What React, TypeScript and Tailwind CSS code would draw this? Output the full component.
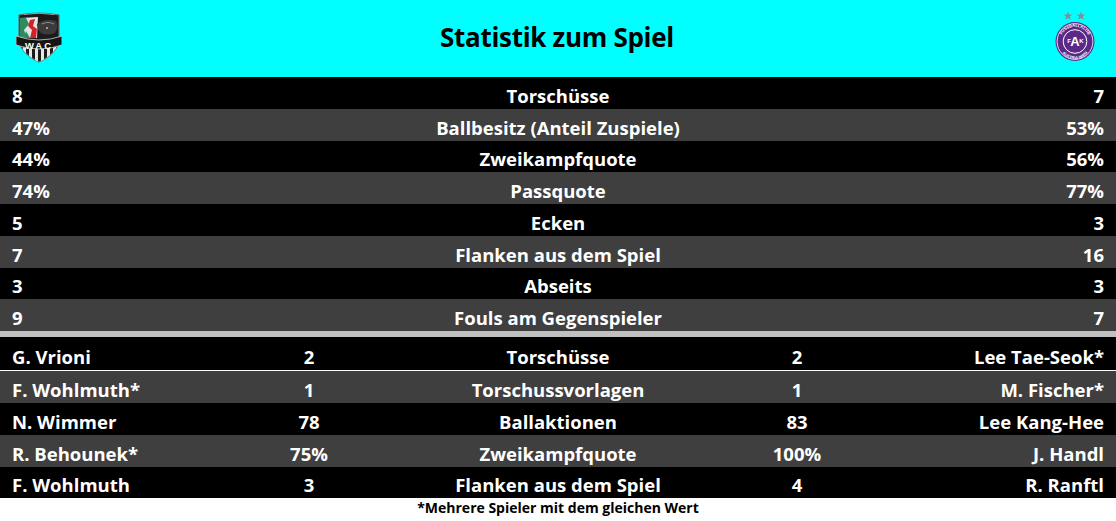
import React from "react";

const font = "font-['Open_Sans','Noto_Sans',sans-serif]";

const teamStats = [
  ["8", "Torschüsse", "7"],
  ["47%", "Ballbesitz (Anteil Zuspiele)", "53%"],
  ["44%", "Zweikampfquote", "56%"],
  ["74%", "Passquote", "77%"],
  ["5", "Ecken", "3"],
  ["7", "Flanken aus dem Spiel", "16"],
  ["3", "Abseits", "3"],
  ["9", "Fouls am Gegenspieler", "7"],
];

const playerStats = [
  ["G. Vrioni", "2", "Torschüsse", "2", "Lee Tae-Seok*"],
  ["F. Wohlmuth*", "1", "Torschussvorlagen", "1", "M. Fischer*"],
  ["N. Wimmer", "78", "Ballaktionen", "83", "Lee Kang-Hee"],
  ["R. Behounek*", "75%", "Zweikampfquote", "100%", "J. Handl"],
  ["F. Wohlmuth", "3", "Flanken aus dem Spiel", "4", "R. Ranftl"],
];

const WacLogo = () => (
  <svg width="46" height="52" viewBox="0 0 46 52">
    <defs>
      <clipPath id="shield">
        <path d="M3 4 Q23 0 43 4 L43 28 Q42 42 23 51 Q4 42 3 28 Z" />
      </clipPath>
    </defs>
    <path d="M3 4 Q23 0 43 4 L43 28 Q42 42 23 51 Q4 42 3 28 Z" fill="#1b1b1b" stroke="#6b6b6b" strokeWidth="1.2" />
    <g clipPath="url(#shield)">
      {/* green / white / red field */}
      <path d="M4 7 L22 6 L21 27 L4 27 Z" fill="#e4e4e4" />
      <path d="M4 7 L10 7 L13 13 L8 19 L11 27 L4 27 Z" fill="#2e8b60" />
      <path d="M14 9 L19 8 L17 15 L21 18 L20 27 L14 27 L16 19 L12 15 Z" fill="#d2232a" />
      <path d="M10 20 L14 27 L8 27 Z" fill="#2e8b60" />
      {/* wolf head */}
      <path d="M21 13 Q29 7 40 10 Q43 16 39 22 Q32 25 25 22 Q21 18 21 13 Z" fill="#3b3b3b" />
      <path d="M26 13 Q32 10 38 13" stroke="#909090" strokeWidth="1.2" fill="none" />
      <circle cx="31" cy="17" r="1" fill="#bdbdbd" />
      {/* stripes */}
      {[7, 13, 19, 25, 31, 37].map((x) => (
        <rect key={x} x={x} y="34" width="3" height="20" fill="#e6e6e6" />
      ))}
    </g>
    <path d="M0 25 Q23 33 46 25 L46 34 Q23 42 0 34 Z" fill="#151515" stroke="#d0d0d0" strokeWidth="0.8" />
    <text x="23" y="37.5" textAnchor="middle" fontFamily="Liberation Sans, sans-serif" fontWeight="700" fontSize="9.5" fill="#ffffff" letterSpacing="2">
      WAC
    </text>
    <path d="M8 3.5 Q23 1 38 3.5" stroke="#9a9a9a" strokeWidth="1" fill="none" />
  </svg>
);

const Star = ({ x }: { x: number }) => (
  <polygon
    transform={`translate(${x} 0)`}
    points="0,-4.2 1.2,-1.4 4.2,-1.3 1.9,0.6 2.7,3.6 0,1.9 -2.7,3.6 -1.9,0.6 -4.2,-1.3 -1.2,-1.4"
    fill="#8c8c8c"
  />
);

const AustriaLogo = () => (
  <svg width="46" height="56" viewBox="0 0 46 56">
    <g transform="translate(0 8)">
      <Star x={16} />
      <Star x={29} />
    </g>
    <circle cx="23" cy="33.5" r="19.5" fill="#5a2a88" />
    <circle cx="23" cy="33.5" r="17.9" fill="none" stroke="#ffffff" strokeWidth="0.8" />
    <circle cx="23" cy="33.5" r="11.8" fill="none" stroke="#ffffff" strokeWidth="1" />
    <path id="arcTop" d="M8.2 33.5 A14.8 14.8 0 0 1 37.8 33.5" fill="none" />
    <text fontSize="4" fill="#ffffff" fontFamily="Liberation Sans, sans-serif" fontWeight="700">
      <textPath href="#arcTop" startOffset="50%" textAnchor="middle">FUSSBALLKLUB</textPath>
    </text>
    <path id="arcBot" d="M6.8 35 A16.2 16.2 0 0 0 39.2 35" fill="none" />
    <text fontSize="4" fill="#ffffff" fontFamily="Liberation Sans, sans-serif" fontWeight="700">
      <textPath href="#arcBot" startOffset="50%" textAnchor="middle">AUSTRIA WIEN</textPath>
    </text>
    <text x="23" y="38" textAnchor="middle" fontFamily="Liberation Sans, sans-serif" fontWeight="700" fontSize="13" fill="#ffffff">
      A
    </text>
    <text x="17" y="35" textAnchor="middle" fontFamily="Liberation Sans, sans-serif" fontWeight="700" fontSize="6" fill="#ffffff">
      F
    </text>
    <text x="29.5" y="35" textAnchor="middle" fontFamily="Liberation Sans, sans-serif" fontWeight="700" fontSize="6" fill="#ffffff">
      K
    </text>
  </svg>
);

export default function App() {
  return (
    <div className={`w-[1116px] h-[521px] bg-white text-white font-bold ${font}`}>
      {/* Header */}
      <header className="h-[77px] bg-[#00ffff] flex items-center justify-between px-4">
        <div className="w-[46px] -mt-[3px]">
          <WacLogo />
        </div>
        <h1 className="text-[26px] leading-none text-black font-bold tracking-[-0.3px] pb-[4px]">
          Statistik zum Spiel
        </h1>
        <div className="w-[46px] mr-[2px] -mt-[6px]">
          <AustriaLogo />
        </div>
      </header>

      {/* Team statistics */}
      <div>
        {teamStats.map(([home, label, away], i) => (
          <div
            key={label}
            className={`h-[31.75px] grid grid-cols-[1fr_auto_1fr] items-end px-3 pb-[2px] text-[18.5px] leading-[22px] ${
              i % 2 === 0 ? "bg-black" : "bg-[#3f3f3f]"
            }`}
          >
            <span>{home}</span>
            <span className="text-center">{label}</span>
            <span className="text-right">{away}</span>
          </div>
        ))}
      </div>

      <div className="h-[6px] bg-[#c0c0c0]" />

      {/* Player statistics */}
      <div>
        {playerStats.map(([homeName, homeVal, label, awayVal, awayName], i) => (
          <div
            key={label + i}
            className={`grid grid-cols-[250px_118px_380px_98px_1fr] items-end pb-[2px] text-[18.5px] leading-[22px] ${
              i === 0 ? "h-[34px] border-b border-white" : i === 4 ? "h-[31px]" : "h-[32px]"
            } ${i % 2 === 0 ? "bg-black" : "bg-[#3f3f3f]"}`}
          >
            <span className="pl-3">{homeName}</span>
            <span className="text-center">{homeVal}</span>
            <span className="text-center">{label}</span>
            <span className="text-center">{awayVal}</span>
            <span className="text-right pr-3">{awayName}</span>
          </div>
        ))}
      </div>

      {/* Footnote */}
      <p className="text-center text-black text-[14px] leading-[20px]">
        *Mehrere Spieler mit dem gleichen Wert
      </p>
    </div>
  );
}
